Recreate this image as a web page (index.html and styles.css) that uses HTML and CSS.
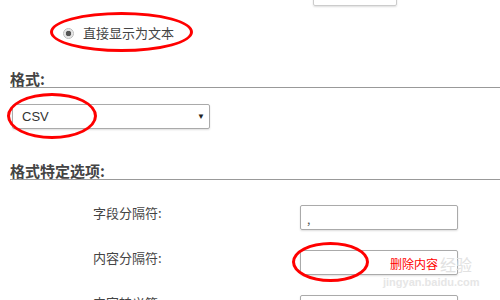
FILE: index.html
```html
<!DOCTYPE html>
<html lang="zh-CN">
<head>
<meta charset="UTF-8" />
<title>导出选项</title>
<link rel="stylesheet" href="styles.css">
</head>
<body>

<div class="top-box"></div>

<div class="radio-row">
  <span class="radio"></span>
  <span>直接显示为文本</span>
</div>

<h2 class="section first">格式:</h2>
<div class="select">
  <span>CSV</span>
  <span class="arrow">▼</span>
</div>

<h2 class="section">格式特定选项:</h2>
<div class="options">
  <label>字段分隔符:</label>
  <div class="input"><span class="value">,</span></div>
  <label>内容分隔符:</label>
  <div class="input"></div>
  <label>内容转义符:</label>
  <div class="input"></div>
</div>

<!-- red marker rings drawn over the screenshot -->
<div class="ring ring-radio"></div>
<div class="ring ring-select"></div>
<div class="ring ring-input"></div>
<div class="note">删除内容</div>
<div class="watermark">
  <div class="wm-logo">经验</div>
  <div class="wm-url">jingyan.baidu.com</div>
</div>

</body>
</html>
```

FILE: styles.css
```css
body {
  margin: 0;
  font-family: "Noto Sans CJK SC", "Liberation Sans", sans-serif;
  font-size: 13px;
  color: #333;
  background: #fff;
  overflow: hidden;
  height: 300px;
  position: relative;
}

.top-box {
  margin-left: 313px;
  margin-top: -20px;
  width: 82px;
  height: 24px;
  border: 1px solid #ccc;
  border-radius: 2px;
  box-shadow: 0 1px 2px #ddd;
}

.radio-row {
  display: flex;
  align-items: center;
  gap: 9px;
  margin-top: 17px;
  padding-left: 63px;
  height: 20px;
  line-height: 20px;
  font-size: 13px;
  color: #444;
}
.radio {
  width: 11px;
  height: 11px;
  border-radius: 50%;
  box-sizing: border-box;
  border: 1px solid #bbb;
  background: radial-gradient(circle, #555 0, #555 2.5px, #ddd 3px, #f4f4f4 5px);
}

.section {
  margin: 34px 0 0 10px;
  font-size: 15px;
  line-height: 16px;
  font-weight: 700;
  color: #444;
  border-bottom: 1px solid #999;
}
.section.first {
  margin-top: 28px;
}

.select {
  display: flex;
  justify-content: space-between;
  align-items: center;
  box-sizing: border-box;
  margin: 16px 0 0 12px;
  width: 198px;
  height: 25px;
  padding: 0 4px 0 9px;
  border: 1px solid #aaa;
  border-radius: 2px;
  box-shadow: 0 1px 2px #ddd;
  font-family: "Liberation Sans", sans-serif;
  font-size: 13px;
  color: #333;
}
.select .arrow {
  font-size: 8px;
  color: #222;
}

.options {
  display: grid;
  grid-template-columns: 207px 158px;
  row-gap: 20px;
  margin-top: 25px;
  padding-left: 93px;
}
.options label {
  line-height: 15px;
  font-size: 13px;
  color: #444;
}
.input {
  box-sizing: border-box;
  height: 25px;
  border: 1px solid #aaa;
  border-radius: 2px;
  box-shadow: 0 1px 2px #ddd;
  padding: 6px 6px 0;
  font-size: 12px;
  line-height: 14px;
}
.input .value {
  color: #555;
}

.ring {
  position: absolute;
  box-sizing: border-box;
  border: 3px solid #f00;
  border-radius: 50%;
}
.ring-radio {
  left: 50px;
  top: 12px;
  width: 143px;
  height: 40px;
}
.ring-select {
  left: 7px;
  top: 93px;
  width: 90px;
  height: 46px;
}
.ring-input {
  left: 292px;
  top: 242px;
  width: 77px;
  height: 40px;
}

.note {
  position: absolute;
  left: 390px;
  top: 256px;
  font-size: 12px;
  line-height: 16px;
  color: #f00;
}

.watermark {
  position: absolute;
  left: 383px;
  top: 252px;
  pointer-events: none;
}
.wm-logo {
  margin-left: 57px;
  font-size: 16px;
  line-height: 24px;
  color: #e2e2e2;
}
.wm-url {
  font-family: "Liberation Sans", sans-serif;
  font-size: 11px;
  font-weight: 700;
  line-height: 12px;
  color: #e6e6e6;
}
```
